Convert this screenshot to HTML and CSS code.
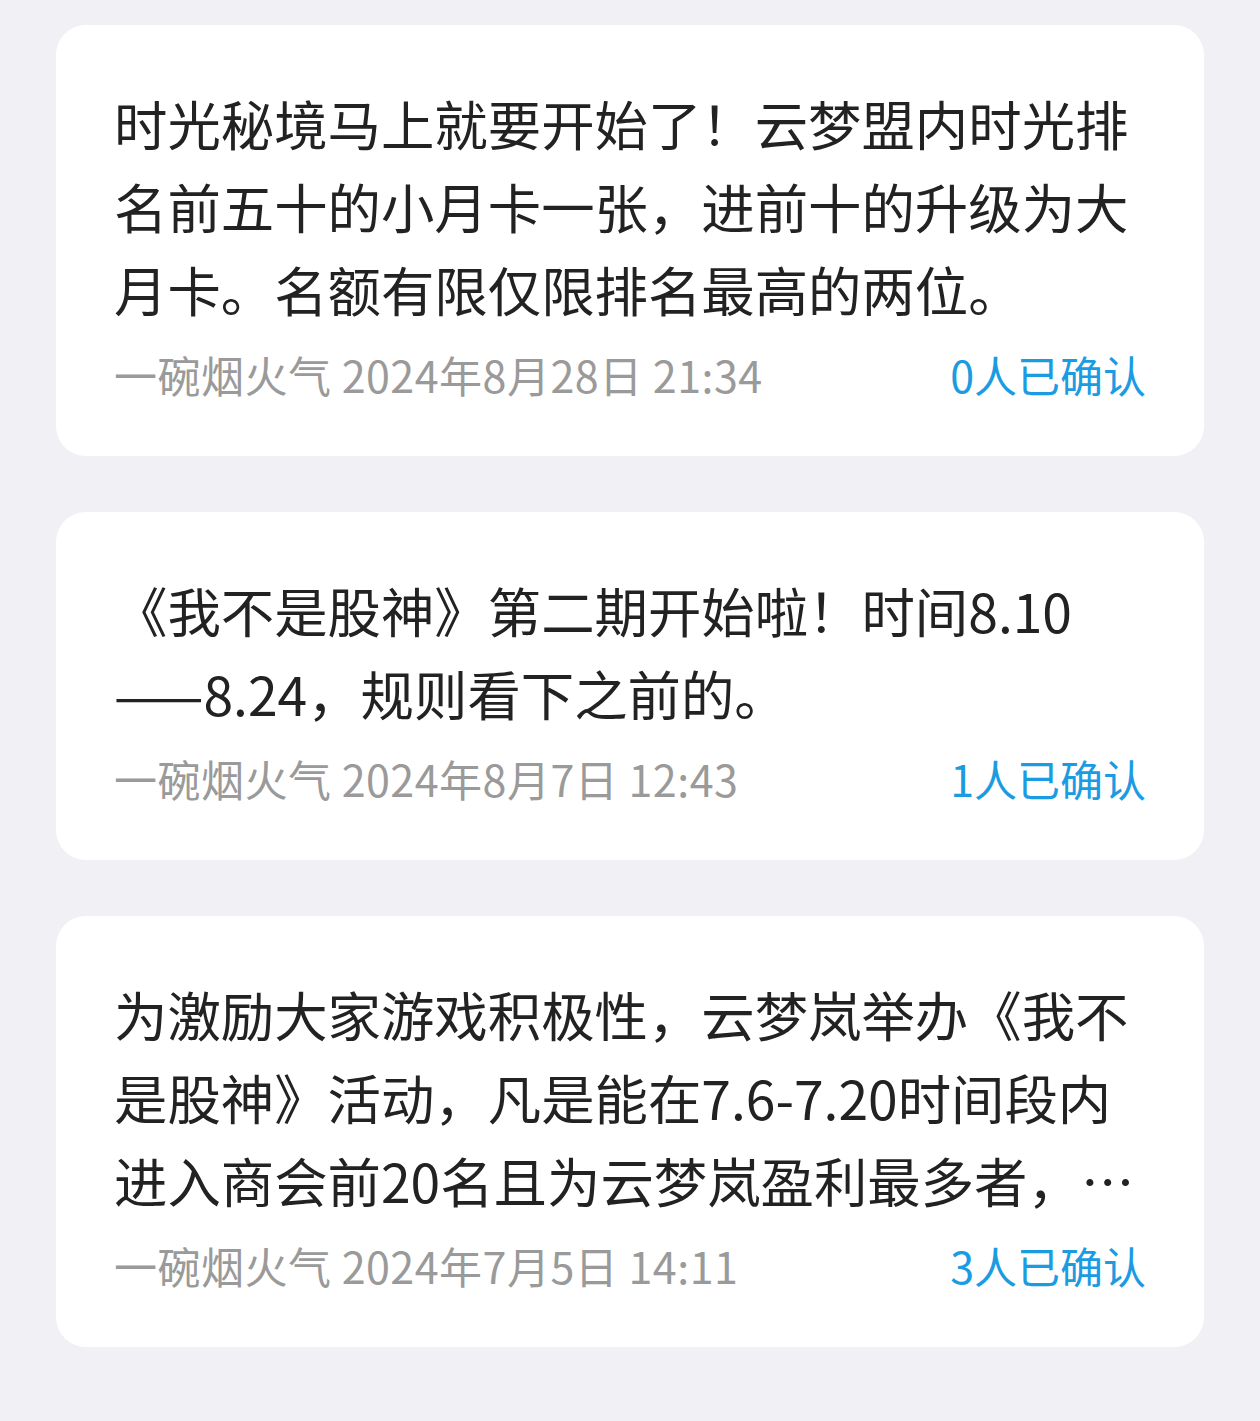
FILE: index.html
```html
<!DOCTYPE html>
<html>
<head>
    <meta charset="utf-8">
    <title>公告</title>
    <link rel="stylesheet" href="styles.css">
</head>
<body>
    <div class="notice-list">

        <div class="notice-card">
            <p class="notice-text">时光秘境马上就要开始了！云梦盟内时光排名前五十的小月卡一张，进前十的升级为大月卡。名额有限仅限排名最高的两位。</p>
            <div class="notice-meta">
                <span class="meta-info">一碗烟火气 2024年8月28日 21:34</span>
                <span class="meta-confirm">0人已确认</span>
            </div>
        </div>

        <div class="notice-card">
            <p class="notice-text">《我不是股神》第二期开始啦！时间8.10——8.24，规则看下之前的。</p>
            <div class="notice-meta">
                <span class="meta-info">一碗烟火气 2024年8月7日 12:43</span>
                <span class="meta-confirm">1人已确认</span>
            </div>
        </div>

        <div class="notice-card">
            <p class="notice-text clamp">为激励大家游戏积极性，云梦岚举办《我不是股神》活动，凡是能在7.6-7.20时间段内进入商会前20名且为云梦岚盈利最多者，可获得大月卡一张，第二名获得小月卡一张。</p>
            <div class="notice-meta">
                <span class="meta-info">一碗烟火气 2024年7月5日 14:11</span>
                <span class="meta-confirm">3人已确认</span>
            </div>
        </div>

    </div>
</body>
</html>
```

FILE: styles.css
```css
* {
    margin: 0;
    padding: 0;
    box-sizing: border-box;
}

html,
body {
    height: 100%;
}

body {
    background: #f1f1f5;
    font-family: "Noto Sans CJK SC", "Noto Sans", sans-serif;
}

.notice-list {
    display: flex;
    flex-direction: column;
    gap: 56px;
    padding: 25px 56px;
}

.notice-card {
    background: #fff;
    border-radius: 30px;
    padding: 56px 58px 52px;
}

.notice-text {
    color: #222;
    font-size: 53.4px;
    line-height: 83px;
}

.notice-text.clamp {
    display: -webkit-box;
    -webkit-box-orient: vertical;
    -webkit-line-clamp: 3;
    overflow: hidden;
}

.notice-meta {
    display: flex;
    justify-content: space-between;
    font-size: 43px;
    line-height: 60px;
    margin-top: 14px;
}

.meta-info {
    color: #9a9a9a;
    letter-spacing: 0.5px;
}

.meta-confirm {
    color: #1a9be2;
}
```
